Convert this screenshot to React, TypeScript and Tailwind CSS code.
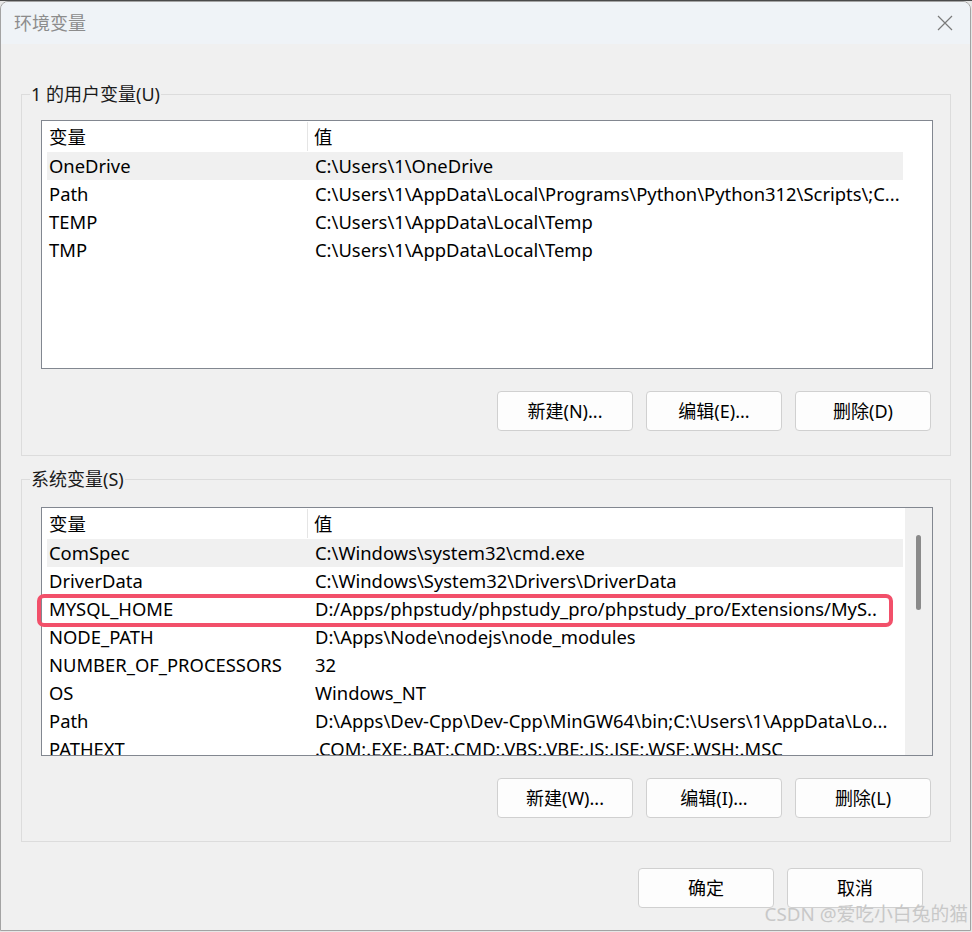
import React from 'react';

type Row = { name: string; value: string };

const userRows: Row[] = [
  { name: 'OneDrive', value: 'C:\\Users\\1\\OneDrive' },
  { name: 'Path', value: 'C:\\Users\\1\\AppData\\Local\\Programs\\Python\\Python312\\Scripts\\;C...' },
  { name: 'TEMP', value: 'C:\\Users\\1\\AppData\\Local\\Temp' },
  { name: 'TMP', value: 'C:\\Users\\1\\AppData\\Local\\Temp' },
];

const systemRows: Row[] = [
  { name: 'ComSpec', value: 'C:\\Windows\\system32\\cmd.exe' },
  { name: 'DriverData', value: 'C:\\Windows\\System32\\Drivers\\DriverData' },
  { name: 'MYSQL_HOME', value: 'D:/Apps/phpstudy/phpstudy_pro/phpstudy_pro/Extensions/MyS..' },
  { name: 'NODE_PATH', value: 'D:\\Apps\\Node\\nodejs\\node_modules' },
  { name: 'NUMBER_OF_PROCESSORS', value: '32' },
  { name: 'OS', value: 'Windows_NT' },
  { name: 'Path', value: 'D:\\Apps\\Dev-Cpp\\Dev-Cpp\\MinGW64\\bin;C:\\Users\\1\\AppData\\Lo...' },
  { name: 'PATHEXT', value: '.COM;.EXE;.BAT;.CMD;.VBS;.VBE;.JS;.JSE;.WSF;.WSH;.MSC' },
];

function WinButton({ label }: { label: string }) {
  return (
    <button
      type="button"
      className="w-[136px] h-[40px] rounded-[4px] border border-[#d0d0d0] bg-[#fdfdfd] text-[18px] text-black leading-none"
    >
      {label}
    </button>
  );
}

function VarList({ rows, scroll }: { rows: Row[]; scroll?: boolean }) {
  return (
    <div className="h-[249px] border border-[#828790] bg-white flex overflow-hidden text-[18.4px]">
      <div className="flex-1 flex flex-col">
        <div className="h-[31px] w-[861px] flex items-center shrink-0">
          <div className="w-[266px] pl-[7px] border-r border-[#e5e5e5] h-[29px] flex items-center">变量</div>
          <div className="pl-[6px]">值</div>
        </div>
        {rows.map((r, i) => (
          <div
            key={r.name + i}
            className={`ml-[5px] w-[856px] h-[28px] shrink-0 flex items-center ${i === 0 ? 'bg-[#f0f0f0]' : ''}`}
          >
            <div className="w-[268px] pl-[2px] whitespace-nowrap">{r.name}</div>
            <div className="flex-1 truncate pr-[2px]">{r.value}</div>
          </div>
        ))}
      </div>
      {scroll && (
        <div className="w-[27px] bg-[#f0f0f0] flex justify-center pt-[27px]">
          <div className="w-[5px] h-[75px] rounded-full bg-[#8a8a8a]" />
        </div>
      )}
    </div>
  );
}

export default function App() {
  return (
    <div
      className="w-[972px] h-[932px] bg-[#e6e6e6] border-t border-[#4a4a4a] text-[18px] text-black"
      style={{ fontFamily: '"Noto Sans", "Noto Sans CJK SC", sans-serif' }}
    >
      <div className="relative w-[971px] h-[930px] rounded-t-[8px] border border-[#a3a3a3] bg-[#f0f0f0] flex flex-col overflow-hidden">
        {/* title bar */}
        <div className="h-[42px] shrink-0 bg-[#eff3f7] flex items-center justify-between pl-[13px] pr-[17px]">
          <span className="text-[#8c8c8c] text-[18px]">环境变量</span>
          <svg width="16" height="16" viewBox="0 0 16 16" className="text-[#7a7a7a]">
            <path d="M1 1 L15 15 M15 1 L1 15" stroke="currentColor" strokeWidth="1.2" fill="none" />
          </svg>
        </div>

        <div className="flex flex-col pl-[20px] pr-[19px]">
          {/* user vars */}
          <fieldset className="mt-[37px] border border-[#dcdcdc] p-0 m-0">
            <legend className="ml-[8px] px-px h-[26px] leading-[26px] text-[#1a1a1a]">1 的用户变量(U)</legend>
            <div className="pl-[19px] pr-[17px] pt-[13px] pb-[24px] flex flex-col">
              <VarList rows={userRows} />
              <div className="mt-[22px] pr-[2px] flex justify-end gap-[13px]">
                <WinButton label="新建(N)..." />
                <WinButton label="编辑(E)..." />
                <WinButton label="删除(D)" />
              </div>
            </div>
          </fieldset>

          {/* system vars */}
          <fieldset className="mt-[10px] border border-[#dcdcdc] p-0 m-0">
            <legend className="ml-[8px] px-px h-[26px] leading-[26px] text-[#1a1a1a]">系统变量(S)</legend>
            <div className="pl-[19px] pr-[17px] pt-[15px] pb-[23px] flex flex-col">
              <div className="relative">
                <VarList rows={systemRows} scroll />
                <div className="absolute left-[-4px] top-[87px] w-[856px] h-[33px] rounded-[7px] border-[4px] border-[#f2506a]" />
              </div>
              <div className="mt-[22px] pr-[2px] flex justify-end gap-[13px]">
                <WinButton label="新建(W)..." />
                <WinButton label="编辑(I)..." />
                <WinButton label="删除(L)" />
              </div>
            </div>
          </fieldset>

          <div className="mt-[26px] flex justify-end gap-[13px] pr-[28px]">
            <WinButton label="确定" />
            <WinButton label="取消" />
          </div>
        </div>

        <div className="absolute right-[2px] bottom-[2px] text-[18.8px] text-[#c8c8c8]">
          CSDN @爱吃小白兔的猫
        </div>
      </div>
    </div>
  );
}
